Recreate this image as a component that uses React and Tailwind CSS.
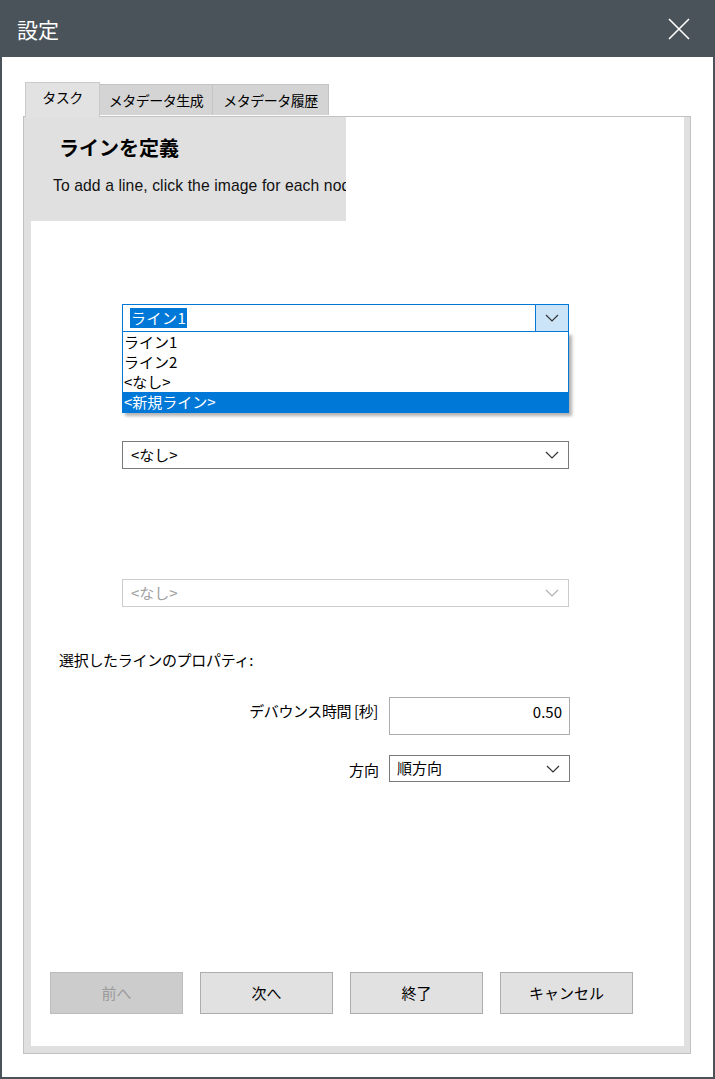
import React from "react";

const JP = { fontFamily: '"Noto Sans CJK JP", "Noto Sans", sans-serif' };
const EN = { fontFamily: '"Liberation Sans", Arial, "Noto Sans CJK JP", sans-serif' };

function Chevron({ color = "#333" }) {
  return (
    <svg width="14" height="8" viewBox="0 0 14 8" fill="none">
      <path d="M1 1 L7 7 L13 1" stroke={color} strokeWidth="1.2" />
    </svg>
  );
}

export default function App() {
  return (
    <div lang="ja" className="w-[715px] h-[1079px] bg-[#4b535a] flex flex-col px-[2px] pb-[2px]" style={JP}>
      {/* title bar */}
      <div className="h-[57px] flex items-center justify-between pl-[15px] pr-[23px] shrink-0">
        <span className="text-white text-[21px] leading-none pt-[2px]">設定</span>
        <svg width="22" height="22" viewBox="0 0 22 22">
          <path d="M1 1 L21 21 M21 1 L1 21" stroke="#fff" strokeWidth="1.6" />
        </svg>
      </div>

      {/* body */}
      <div className="flex-1 bg-white flex flex-col pt-[25px] pl-[21px]">
        {/* tabs */}
        <div className="flex items-end h-[34px] ml-[2px] relative z-10">
          <div className="h-[35px] w-[75px] -mb-px bg-[#e2e2e2] border-l border-t border-r border-[#cacaca] flex items-start justify-center pt-[4px] text-[14px] tracking-[-0.5px] text-black">
            タスク
          </div>
          <div className="h-[31px] w-[113px] mb-px bg-[#d4d4d4] border-t border-r border-[#c4c4c4] flex items-center justify-center text-[14px] tracking-[-0.5px] text-black">
            メタデータ生成
          </div>
          <div className="h-[31px] w-[116px] mb-px bg-[#d4d4d4] border-t border-r border-[#c4c4c4] flex items-center justify-center text-[14px] tracking-[-0.5px] text-black">
            メタデータ履歴
          </div>
        </div>

        {/* panel */}
        <div className="w-[668px] h-[938px] border border-[#c2c2c2] bg-[#e0e0e0] pl-[7px] pr-[6px] pb-[7px]">
          <div className="w-full h-full bg-white flex flex-col">
            {/* header */}
            <div className="-ml-[7px] w-[322px] h-[104px] bg-[#e0e0e0] overflow-hidden shrink-0">
              <div className="pl-[35px] pt-[19px] text-[20px] font-bold text-black leading-[24px]">ラインを定義</div>
              <div className="pl-[29px] pt-[16px] text-[15.7px] tracking-[0.1px] text-[#111] whitespace-nowrap leading-[20px]" style={EN}>
                To add a line, click the image for each node
              </div>
            </div>

            {/* combo 1 (open) */}
            <div className="ml-[91px] mt-[83px] w-[447px] relative">
              <div className="h-[28px] border border-[#0078d7] flex items-stretch bg-white">
                <div className="flex-1 flex items-center pl-[7px]">
                  <span className="bg-[#0078d7] text-white text-[15px] leading-[20px] px-[1px] tracking-[0.5px]">ライン1</span>
                </div>
                <div className="w-[33px] bg-[#cce4f7] border-l border-[#0078d7] flex items-center justify-center">
                  <Chevron />
                </div>
              </div>
              <div className="absolute left-0 top-full w-full bg-white border-x border-b border-[#0078d7] shadow-[3px_3px_3px_rgba(0,0,0,0.3)] z-20 text-[15px]">
                <div className="h-[20px] leading-[20px] pl-[1px] text-black">ライン1</div>
                <div className="h-[20px] leading-[20px] pl-[1px] text-black">ライン2</div>
                <div className="h-[20px] leading-[20px] pl-[1px] text-black">&lt;なし&gt;</div>
                <div className="h-[20px] leading-[20px] pl-[1px] text-white bg-[#0078d7]">&lt;新規ライン&gt;</div>
              </div>
            </div>

            {/* combo 2 */}
            <div className="ml-[91px] mt-[109px] w-[447px] h-[28px] border border-[#7a7a7a] flex items-center justify-between pl-[8px] pr-[9px] text-[15px] text-black">
              <span>&lt;なし&gt;</span>
              <Chevron />
            </div>

            {/* combo 3 disabled */}
            <div className="ml-[91px] mt-[110px] w-[447px] h-[28px] border border-[#cccccc] flex items-center justify-between pl-[8px] pr-[9px] text-[15px] text-[#a0a0a0]">
              <span>&lt;なし&gt;</span>
              <Chevron color="#b0b0b0" />
            </div>

            {/* properties */}
            <div className="ml-[28px] mt-[43px] text-[15px] leading-[20px] tracking-[-0.3px] text-black">選択したラインのプロパティ:</div>

            <div className="mt-[27px] flex items-start">
              <div className="w-[347px] text-right text-[15px] leading-[20px] tracking-[-0.4px] text-black pt-[4px]">デバウンス時間 [秒]</div>
              <div className="ml-[11px] w-[181px] h-[38px] border border-[#adadad] text-right pr-[7px] pt-[4px] text-[15px] leading-[20px] text-black">
                0.50
              </div>
            </div>

            <div className="mt-[20px] flex items-center">
              <div className="w-[348px] text-right text-[15px] leading-[20px] text-black pt-[2px]">方向</div>
              <div className="ml-[10px] w-[181px] h-[27px] border border-[#7a7a7a] flex items-center justify-between pl-[7px] pr-[9px] text-[15px] text-black">
                <span className="text-black" style={{ fontFamily: '"Noto Sans CJK SC", "Noto Sans CJK JP", sans-serif' }}>順方向</span>
                <Chevron />
              </div>
            </div>

            {/* buttons */}
            <div className="mt-auto mb-[32px] ml-[19px] flex gap-[17px] text-[15px]">
              <div className="w-[133px] h-[42px] bg-[#cccccc] border border-[#bcbcbc] flex items-center justify-center text-[#9a9a9a]">前へ</div>
              <div className="w-[133px] h-[42px] bg-[#e1e1e1] border border-[#adadad] flex items-center justify-center text-black">次へ</div>
              <div className="w-[133px] h-[42px] bg-[#e1e1e1] border border-[#adadad] flex items-center justify-center text-black">終了</div>
              <div className="w-[133px] h-[42px] bg-[#e1e1e1] border border-[#adadad] flex items-center justify-center text-black">キャンセル</div>
            </div>
          </div>
        </div>
      </div>
    </div>
  );
}
